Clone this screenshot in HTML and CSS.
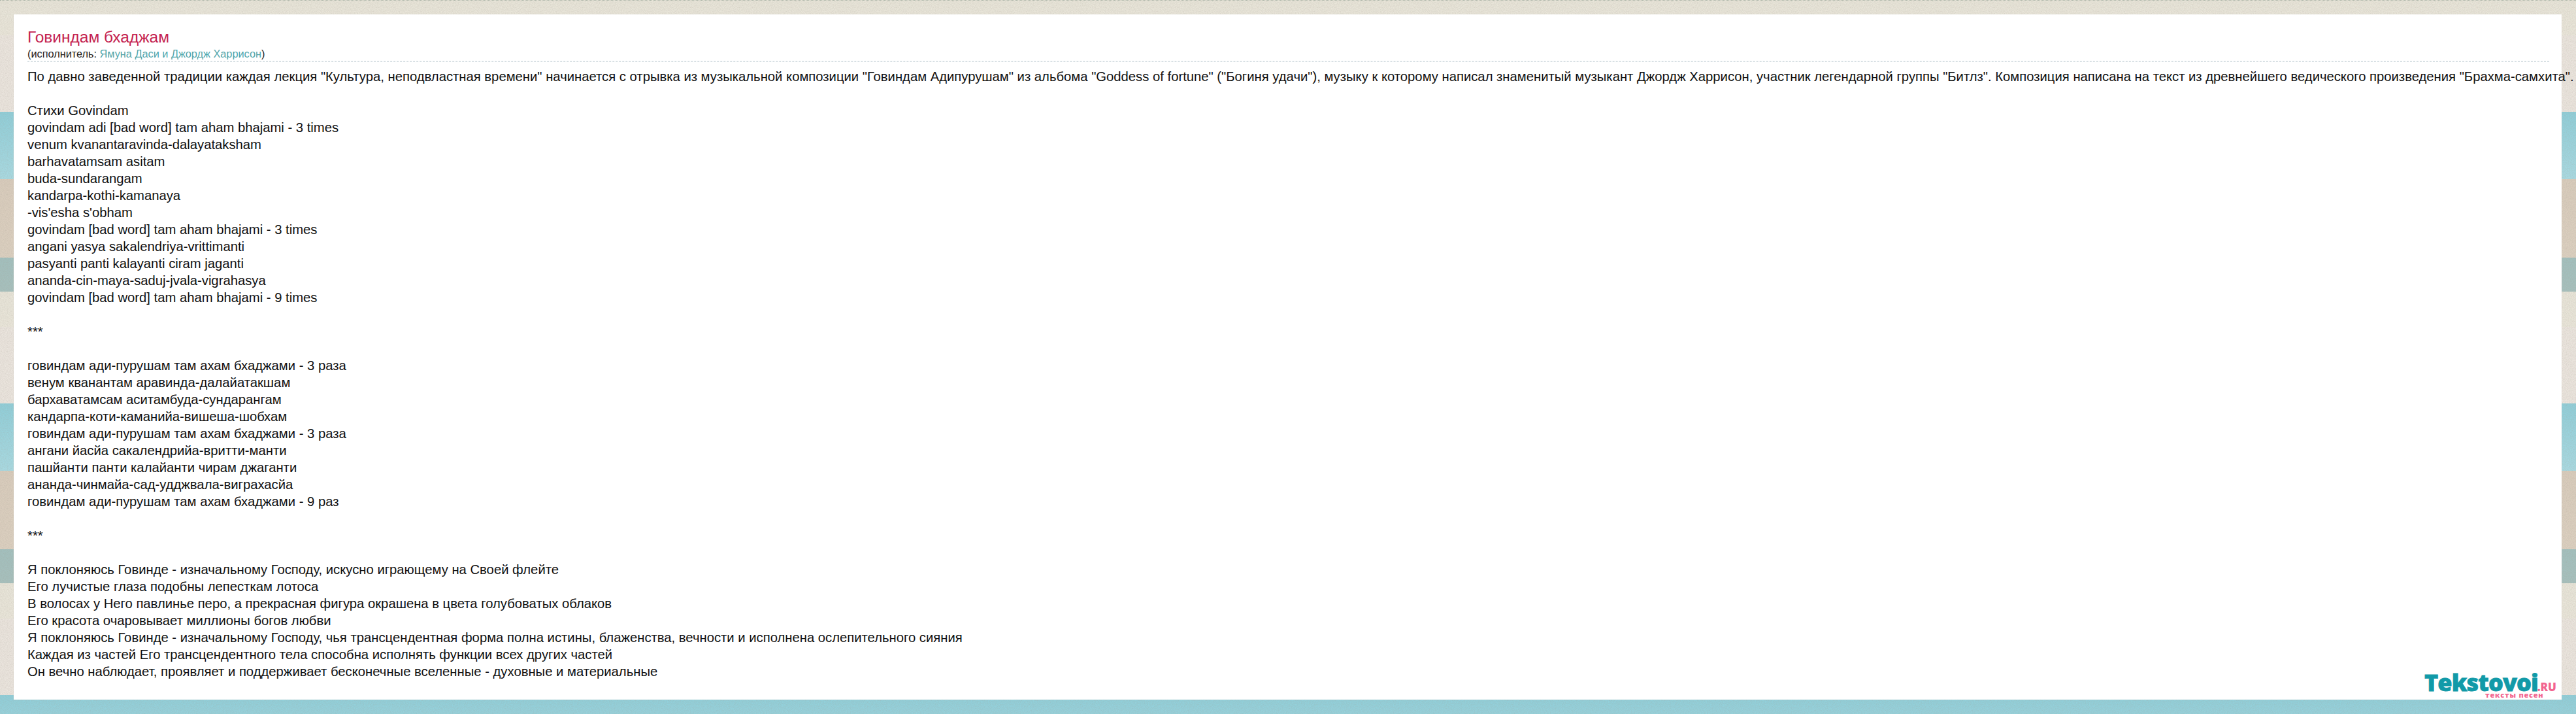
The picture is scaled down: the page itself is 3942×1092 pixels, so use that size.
FILE: index.html
```html
<!DOCTYPE html>
<html lang="ru">
<head>
<meta charset="utf-8">
<title>Говиндам бхаджам</title>
<link rel="stylesheet" href="styles.css">
</head>
<body>
<main class="card">
<header class="head">
<h1 class="title">Говиндам бхаджам</h1>
<p class="sub">(исполнитель: <a class="artist" href="#">Ямуна Даси и Джордж Харрисон</a>)</p>
</header>
<div class="lyrics">По давно заведенной традиции каждая лекция "Культура, неподвластная времени" начинается с отрывка из музыкальной композиции "Говиндам Адипурушам" из альбома "Goddess of fortune" ("Богиня удачи"), музыку к которому написал знаменитый музыкант Джордж Харрисон, участник легендарной группы "Битлз". Композиция написана на текст из древнейшего ведического произведения "Брахма-самхита".

Стихи Govindam
govindam adi [bad word] tam aham bhajami - 3 times
venum kvanantaravinda-dalayataksham
barhavatamsam asitam
buda-sundarangam
kandarpa-kothi-kamanaya
-vis'esha s'obham
govindam [bad word] tam aham bhajami - 3 times
angani yasya sakalendriya-vrittimanti
pasyanti panti kalayanti ciram jaganti
ananda-cin-maya-saduj-jvala-vigrahasya
govindam [bad word] tam aham bhajami - 9 times

***

говиндам ади-пурушам там ахам бхаджами - 3 раза
венум кванантам аравинда-далайатакшам
бархаватамсам аситамбуда-сундарангам
кандарпа-коти-каманийа-вишеша-шобхам
говиндам ади-пурушам там ахам бхаджами - 3 раза
ангани йасйа сакалендрийа-вритти-манти
пашйанти панти калайанти чирам джаганти
ананда-чинмайа-сад-удджвала-виграхасйа
говиндам ади-пурушам там ахам бхаджами - 9 раз

***

Я поклоняюсь Говинде - изначальному Господу, искусно играющему на Своей флейте
Его лучистые глаза подобны лепесткам лотоса
В волосах у Него павлинье перо, а прекрасная фигура окрашена в цвета голубоватых облаков
Его красота очаровывает миллионы богов любви
Я поклоняюсь Говинде - изначальному Господу, чья трансцендентная форма полна истины, блаженства, вечности и исполнена ослепительного сияния
Каждая из частей Его трансцендентного тела способна исполнять функции всех других частей
Он вечно наблюдает, проявляет и поддерживает бесконечные вселенные - духовные и материальные</div>
<a class="logo" href="#"><span class="logo-name">Tekstovoi</span><span class="logo-tld">.RU</span><span class="logo-tag">тексты песен</span></a>
</main>
</body>
</html>
```
FILE: styles.css
```css
html, body {
  margin: 0;
  height: 100%;
}
body {
  box-sizing: border-box;
  padding: 22px 22px 0 21px;
  overflow: hidden;
  border-top: 1px dotted #a9b3a6;
  background-color: #e6e0d6;
  background-image:
    url("data:image/svg+xml,%3Csvg xmlns='http://www.w3.org/2000/svg' width='240' height='240'%3E%3Cfilter id='n'%3E%3CfeTurbulence type='fractalNoise' baseFrequency='.8' numOctaves='2'/%3E%3CfeColorMatrix values='0 0 0 0 .35 0 0 0 0 .32 0 0 0 0 .27 .4 0 0 0 -.12'/%3E%3C/filter%3E%3Crect width='240' height='240' filter='url(%23n)'/%3E%3C/svg%3E"),
    repeating-linear-gradient(
      to bottom,
      #ebe5de 0, #ebe5de 117px,
      #8fced9 117px, #a8dae2 220px,
      #d9ccbc 220px, #dcd0c0 340px,
      #a2c0be 340px, #a6c0bd 392px,
      #e8e5d9 392px, #eae6da 446px
    );
  background-size: 240px 240px, 100% 446px;
  background-position: 0 0, 0 54px;
  background-repeat: repeat, repeat;
  font-family: "Liberation Sans", Arial, sans-serif;
  color: #111;
}
.card {
  position: relative;
  box-sizing: border-box;
  height: 1048px;
  margin-top: -1px;
  padding: 21px 19px 0 21px;
  background: #fff;
  box-shadow: 0 0 1px #c8c4ba;
}
.head {
  border-bottom: 1px dashed #a7b9c2;
  height: 50px;
}
.title {
  margin: 0;
  font-size: 24.5px;
  line-height: 28px;
  font-weight: normal;
  color: #c4224f;
}
.sub {
  margin: 0;
  font-size: 16.3px;
  line-height: 22px;
  color: #222;
}
.artist {
  color: #4fa5aa;
  text-decoration: none;
}
.lyrics {
  margin-top: 10px;
  font-size: 20.25px;
  line-height: 26px;
  white-space: pre;
  color: #111;
}
.logo {
  position: absolute;
  right: 8px;
  bottom: 0;
  width: 202px;
  height: 38px;
  text-decoration: none;
  font-family: "Open Sans", "Liberation Sans", sans-serif;
  font-weight: 800;
}
.logo-name {
  position: absolute;
  left: 0;
  top: -10px;
  font-size: 36px;
  line-height: 44px;
  letter-spacing: -.9px;
  color: #119aa8;
  -webkit-text-stroke: .8px #119aa8;
}
.logo-tld {
  position: absolute;
  right: 0;
  top: 9px;
  font-size: 17px;
  line-height: 20px;
  color: #f2648e;
}
.logo-tag {
  position: absolute;
  left: 93px;
  top: 25px;
  font-size: 11px;
  line-height: 12px;
  letter-spacing: .8px;
  color: #f2648e;
}
```
